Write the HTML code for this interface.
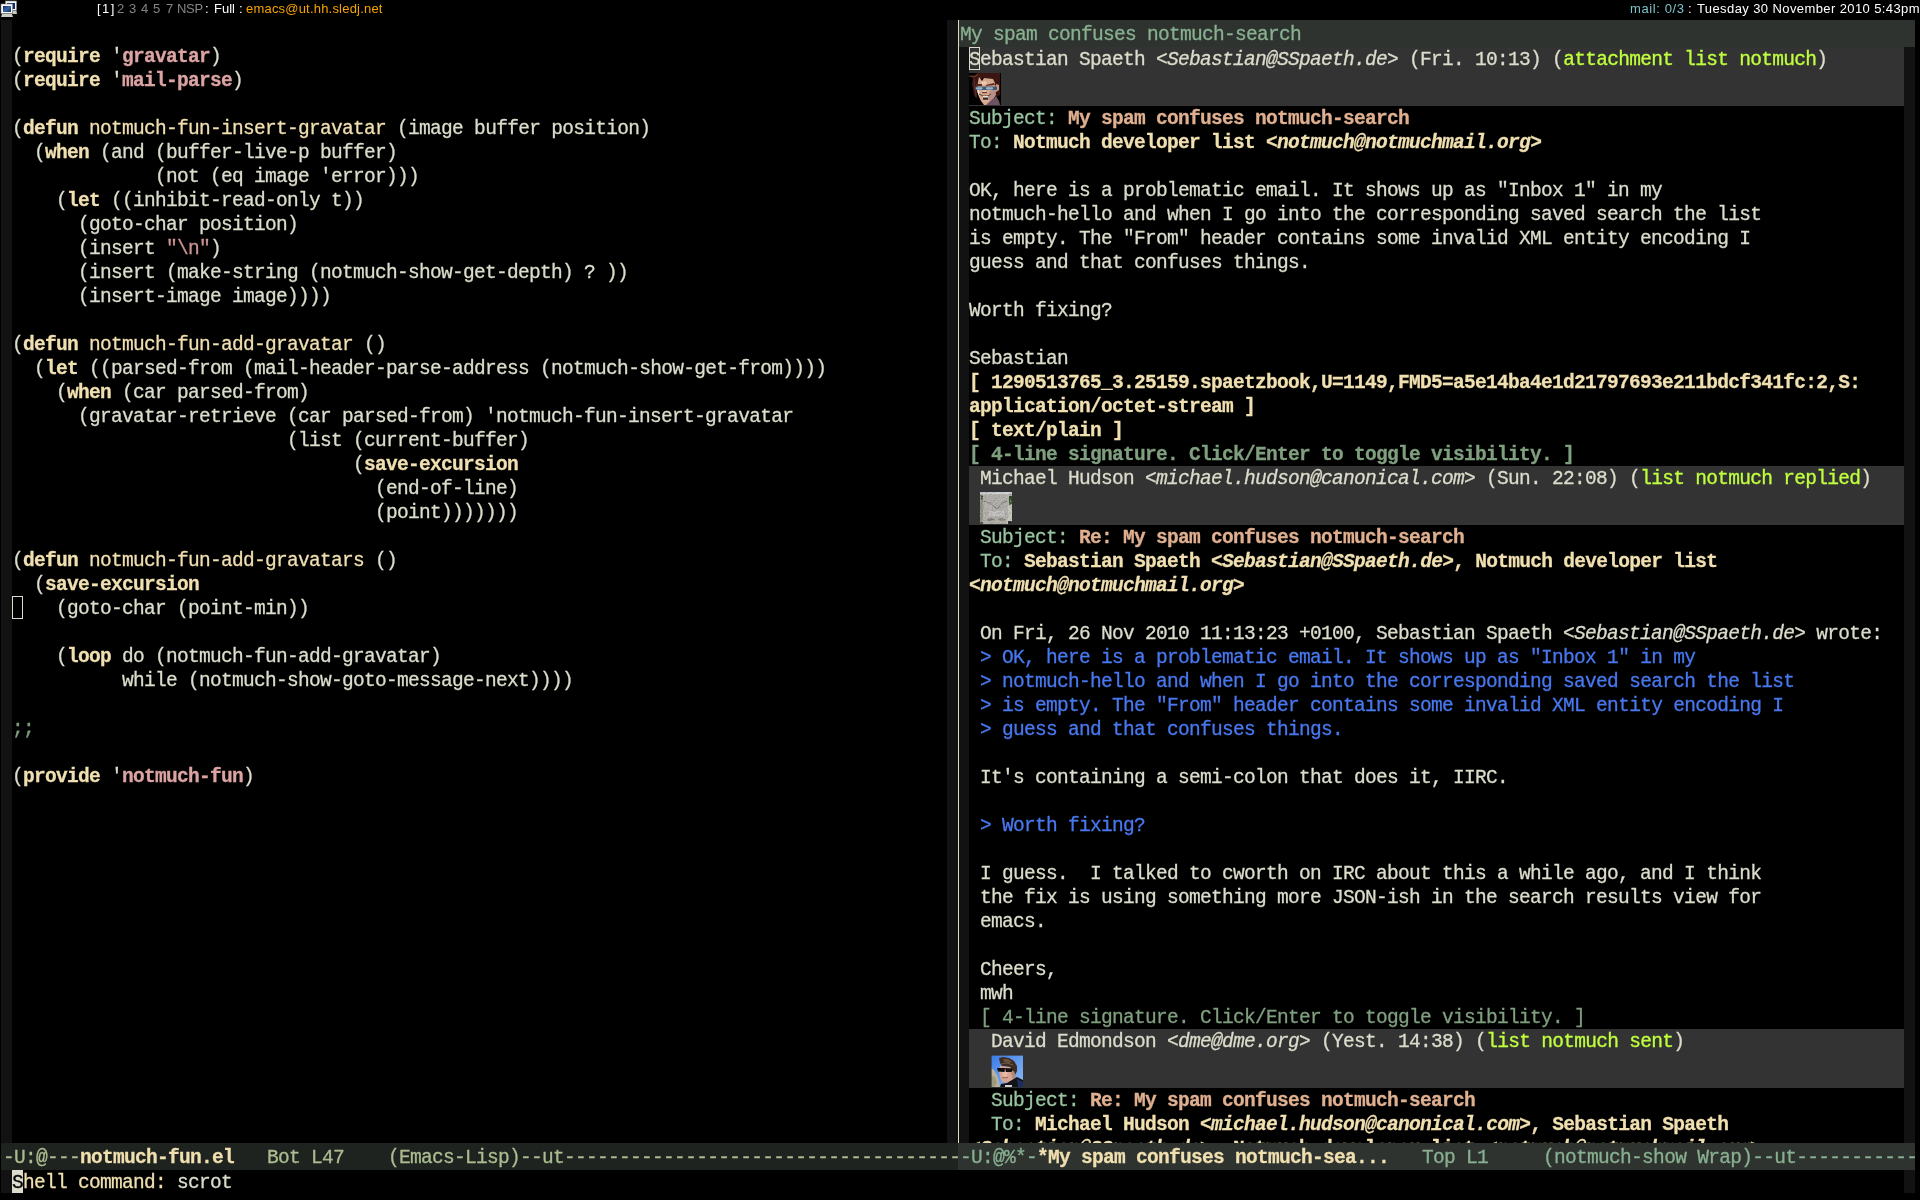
<!DOCTYPE html>
<html><head><meta charset="utf-8"><style>
html,body{margin:0;padding:0;background:#000;width:1920px;height:1200px;overflow:hidden;position:relative}
.r,.wm{will-change:transform}
.r{-webkit-text-stroke:0.3px currentColor;position:absolute;font-family:"Liberation Mono",monospace;font-size:19.5px;letter-spacing:-0.700px;line-height:24px;white-space:pre;color:#dcdccc;height:24px}
.k{color:#f0dfaf;font-weight:bold}
.f{color:#f0dfaf}
.c{color:#dca3a3;font-weight:bold}
.s{color:#cc9393}
.cm{color:#7f9f7f}
.hn{color:#98c4a0}
.sub{color:#dfaf8f;font-weight:bold}
.to{color:#f0dfaf;font-weight:bold}
.toi{color:#f0dfaf;font-weight:bold;font-style:italic}
.i{font-style:italic}
.tag{color:#c0ff3e}
.q{color:#4878f0}
.att{color:#f0dfaf;font-weight:bold}
.sig{color:#7f9f7f}
.sigb{color:#7f9f7f;font-weight:bold}
.hl{color:#88b090}
.ml1{color:#acbc90}
.ml2{color:#88b090}
.mp{color:#f0dfaf}
.cur{color:#000}
.mb{color:#f0dfaf;font-weight:bold}
.sum{position:absolute;left:969px;width:935px;background:#333333}
.av{position:absolute;width:32px;height:32px;overflow:hidden}
.fr{position:absolute;background:#121212}
.clip{position:absolute;overflow:hidden}
.wm{position:absolute;top:0;font-family:"Liberation Sans",sans-serif;font-size:13px;line-height:17px;white-space:pre;color:#fff}
</style></head>
<body>
<!-- WM bar -->
<svg style="position:absolute;left:0;top:0" width="20" height="20" viewBox="0 0 20 20">
<defs><linearGradient id="scr" x1="0" y1="0" x2="1" y2="1"><stop offset="0" stop-color="#0c2a64"/><stop offset="0.5" stop-color="#3a64a0"/><stop offset="1" stop-color="#0c2a64"/></linearGradient></defs>
<rect x="5.5" y="1" width="11" height="9.5" fill="#f4f4f4" stroke="#8a8a8a" stroke-width="0.6"/>
<rect x="7" y="3" width="8" height="6" fill="#0e2c68"/>
<polygon points="13,11 16.5,11 17,14 12.5,14" fill="#c4c8c0"/>
<rect x="1" y="4" width="11.5" height="9.5" fill="#f8f8f8" stroke="#8a8a8a" stroke-width="0.6"/>
<rect x="3" y="6" width="8" height="6" fill="url(#scr)"/>
<polygon points="2,14 12,14 13,17 1,17" fill="#c8ccc4"/>
</svg><div class="wm" style="left:97px;color:#ffffff;letter-spacing:1.5px">[1]</div>
<div class="wm" style="left:117px;color:#858585;letter-spacing:0px">2</div>
<div class="wm" style="left:129px;color:#858585;letter-spacing:0px">3</div>
<div class="wm" style="left:141px;color:#858585;letter-spacing:0px">4</div>
<div class="wm" style="left:153px;color:#858585;letter-spacing:0px">5</div>
<div class="wm" style="left:166px;color:#858585;letter-spacing:0px">7</div>
<div class="wm" style="left:177px;color:#858585;letter-spacing:-0.3px">NSP</div>
<div class="wm" style="left:205px;color:#ffffff;letter-spacing:0px">:</div>
<div class="wm" style="left:214px;color:#ffffff;letter-spacing:0px">Full</div>
<div class="wm" style="left:239px;color:#ffffff;letter-spacing:0px">:</div>
<div class="wm" style="left:246px;color:#f5a300;letter-spacing:0.2px">emacs@ut.hh.sledj.net</div>
<div class="wm" style="left:1630px;color:#7cc4c8;letter-spacing:0.6px">mail: 0/3</div>
<div class="wm" style="left:1688px;color:#ffffff;letter-spacing:0px">:</div>
<div class="wm" style="left:1697px;color:#ffffff;letter-spacing:0.4px">Tuesday 30 November 2010 5:43pm</div>
<!-- fringes -->
<div class="fr" style="left:1px;top:20px;width:11px;height:1123px"></div>
<div class="fr" style="left:947px;top:20px;width:11px;height:1123px"></div>
<div style="position:absolute;left:958px;top:20px;width:1px;height:1123px;background:#dcdcc0"></div>
<div class="fr" style="left:959px;top:47px;width:10px;height:1096px"></div>
<div class="fr" style="left:1904px;top:47px;width:11px;height:1096px"></div>
<div class="fr" style="left:1px;top:1170px;width:11px;height:23px"></div>
<div class="fr" style="left:1904px;top:1170px;width:11px;height:23px"></div>
<!-- left text -->
<div class="clip" style="left:0;top:20px;width:947px;height:1123px">
<div style="position:absolute;left:0;top:-20px">
<div class="r" style="left:12px;top:45px">(<span class="k">require</span> &#x27;<span class="c">gravatar</span>)</div>
<div class="r" style="left:12px;top:69px">(<span class="k">require</span> &#x27;<span class="c">mail-parse</span>)</div>
<div class="r" style="left:12px;top:117px">(<span class="k">defun</span> <span class="f">notmuch-fun-insert-gravatar</span> (image buffer position)</div>
<div class="r" style="left:12px;top:141px">  (<span class="k">when</span> (and (buffer-live-p buffer)</div>
<div class="r" style="left:12px;top:165px">             (not (eq image &#x27;error)))</div>
<div class="r" style="left:12px;top:189px">    (<span class="k">let</span> ((inhibit-read-only t))</div>
<div class="r" style="left:12px;top:213px">      (goto-char position)</div>
<div class="r" style="left:12px;top:237px">      (insert <span class="s">&quot;\n&quot;</span>)</div>
<div class="r" style="left:12px;top:261px">      (insert (make-string (notmuch-show-get-depth) ? ))</div>
<div class="r" style="left:12px;top:285px">      (insert-image image))))</div>
<div class="r" style="left:12px;top:333px">(<span class="k">defun</span> <span class="f">notmuch-fun-add-gravatar</span> ()</div>
<div class="r" style="left:12px;top:357px">  (<span class="k">let</span> ((parsed-from (mail-header-parse-address (notmuch-show-get-from))))</div>
<div class="r" style="left:12px;top:381px">    (<span class="k">when</span> (car parsed-from)</div>
<div class="r" style="left:12px;top:405px">      (gravatar-retrieve (car parsed-from) &#x27;notmuch-fun-insert-gravatar</div>
<div class="r" style="left:12px;top:429px">                         (list (current-buffer)</div>
<div class="r" style="left:12px;top:453px">                               (<span class="k">save-excursion</span></div>
<div class="r" style="left:12px;top:477px">                                 (end-of-line)</div>
<div class="r" style="left:12px;top:501px">                                 (point)))))))</div>
<div class="r" style="left:12px;top:549px">(<span class="k">defun</span> <span class="f">notmuch-fun-add-gravatars</span> ()</div>
<div class="r" style="left:12px;top:573px">  (<span class="k">save-excursion</span></div>
<div class="r" style="left:12px;top:597px">    (goto-char (point-min))</div>
<div class="r" style="left:12px;top:645px">    (<span class="k">loop</span> do (notmuch-fun-add-gravatar)</div>
<div class="r" style="left:12px;top:669px">          while (notmuch-show-goto-message-next))))</div>
<div class="r" style="left:12px;top:717px"><span class="cm">;;</span></div>
<div class="r" style="left:12px;top:765px">(<span class="k">provide</span> &#x27;<span class="c">notmuch-fun</span>)</div>
</div></div>
<div class="clip" style="left:959px;top:47px;width:956px;height:1096px">
<div style="position:absolute;left:-959px;top:-47px">
<div class="sum" style="top:47px;height:59px"></div>
<div class="r" style="left:969px;top:48px">Sebastian Spaeth &lt;<span class="i">Sebastian@SSpaeth.de</span>&gt; (Fri. 10:13) (<span class="tag">attachment list notmuch</span>)</div>
<div class="av" style="left:969px;top:73px"><svg width="32" height="32" viewBox="0 0 32 32"><rect width="32" height="32" fill="#000"/>
<polygon points="0,3 5,2 9,0 31,0 31,22 27,24 26,10 22,6 14,5 10,8 8,14 8,26 5,22 3,12 4,5" fill="#3c1612"/>
<polyline points="0,3 6,4 9,1" fill="none" stroke="#6a4030" stroke-width="1"/>
<polyline points="5,6 6,16 7,24" fill="none" stroke="#5a3428" stroke-width="1"/>
<polygon points="9,9 10,4 13,8 15,5 24,6 26,10 27,17 26,23 23,28 20,32 15,32 12,28 10,24 8,18" fill="#d6a88e"/>
<polygon points="27,11 30,12 30,17 27,19" fill="#c89a84"/>
<polygon points="8,16 10,17 11,23 9,21" fill="#f0dcd0"/>
<polygon points="12,9 17,8 18,11 13,12" fill="#ecc8b4"/>
<polygon points="7,11 13,11 13,13 7,13" fill="#5a2a20"/>
<polygon points="17,12 25,10 26,12 17,13" fill="#5a2a20"/>
<polygon points="21,18 26,16 27,22 24,26 20,29 19,24" fill="#b89088"/>
<polygon points="19,30 25,25 27,23 30,28 31,32 17,32" fill="#6e5260"/>
<rect x="6" y="13.5" width="22" height="3.5" rx="1" fill="#405878"/>
<rect x="7" y="14.2" width="6.5" height="2.2" rx="0.8" fill="#98b8cc"/>
<rect x="17" y="14.2" width="7" height="2.2" rx="0.8" fill="#98b8cc"/>
<rect x="14" y="17" width="3" height="2" fill="#e8c4b0"/>
<rect x="13" y="19" width="5" height="1.2" fill="#6a4034"/>
<polyline points="10,21 14,23 19,23 22,21" fill="none" stroke="#5a3a34" stroke-width="1"/>
<rect x="14" y="23" width="5" height="1.6" fill="#e4e4dc"/>
<rect x="14" y="24.6" width="5" height="2.2" fill="#3a2830"/>
<rect x="14" y="27" width="6" height="2" fill="#e0b09a"/>
</svg></div>
<div class="r" style="left:969px;top:107px"><span class="hn">Subject:</span> <span class="sub">My spam confuses notmuch-search</span></div>
<div class="r" style="left:969px;top:131px"><span class="hn">To:</span> <span class="to">Notmuch developer list &lt;</span><span class="toi">notmuch@notmuchmail.org</span><span class="to">&gt;</span></div>
<div class="r" style="left:969px;top:179px">OK, here is a problematic email. It shows up as &quot;Inbox 1&quot; in my</div>
<div class="r" style="left:969px;top:203px">notmuch-hello and when I go into the corresponding saved search the list</div>
<div class="r" style="left:969px;top:227px">is empty. The &quot;From&quot; header contains some invalid XML entity encoding I</div>
<div class="r" style="left:969px;top:251px">guess and that confuses things.</div>
<div class="r" style="left:969px;top:299px">Worth fixing?</div>
<div class="r" style="left:969px;top:347px">Sebastian</div>
<div class="r" style="left:969px;top:371px"><span class="att">[ 1290513765_3.25159.spaetzbook,U=1149,FMD5=a5e14ba4e1d21797693e211bdcf341fc:2,S:</span></div>
<div class="r" style="left:969px;top:395px"><span class="att">application/octet-stream ]</span></div>
<div class="r" style="left:969px;top:419px"><span class="att">[ text/plain ]</span></div>
<div class="r" style="left:969px;top:443px"><span class="sigb">[ 4-line signature. Click/Enter to toggle visibility. ]</span></div>
<div class="sum" style="top:466px;height:59px"></div>
<div class="r" style="left:980px;top:467px">Michael Hudson &lt;<span class="i">michael.hudson@canonical.com</span>&gt; (Sun. 22:08) (<span class="tag">list notmuch replied</span>)</div>
<div class="av" style="left:980px;top:492px"><svg width="32" height="32" viewBox="0 0 32 32">
<rect width="32" height="32" fill="#b0aca6"/>
<rect x="0" y="0" width="32" height="2" fill="#cfd2d4"/>
<polygon points="0,2 2,3 3,10 3,24 2,30 0,30" fill="#8a8c7c"/>
<polygon points="1,3 3,4 3,8 1,7" fill="#2c3a22"/>
<rect x="29" y="4" width="3" height="11" fill="#2e4a24"/>
<polygon points="28,14 32,12 32,32 27,32 28,24" fill="#c4c8b8"/>
<polyline points="4,9 10,11 17,17 22,11 27,9" fill="none" stroke="#6a6a70" stroke-width="0.9"/>
<polygon points="9,19 24,19 25,24 8,24" fill="#c2c0be"/>
<polygon points="7,27 12,26 15,28 8,29" fill="#7c786e"/>
<polygon points="17,28 21,26 26,27 24,29" fill="#7c786e"/>
<rect x="8" y="30" width="16" height="2" fill="#aaa69a"/>
<rect x="0" y="30" width="3" height="2" fill="#504c40"/>
<rect x="28" y="29" width="4" height="3" fill="#2a2e26"/>
<rect x="0" y="0" width="1" height="1" fill="#8c8c8c" opacity="0.35"/><rect x="1" y="0" width="1" height="1" fill="#787878" opacity="0.35"/><rect x="2" y="0" width="1" height="1" fill="#a0a0a0" opacity="0.35"/><rect x="3" y="0" width="1" height="1" fill="#a0a0a0" opacity="0.35"/><rect x="4" y="0" width="1" height="1" fill="#a0a0a0" opacity="0.35"/><rect x="5" y="0" width="1" height="1" fill="#787878" opacity="0.35"/><rect x="6" y="0" width="1" height="1" fill="#787878" opacity="0.35"/><rect x="7" y="0" width="1" height="1" fill="#a0a0a0" opacity="0.35"/><rect x="8" y="0" width="1" height="1" fill="#a0a0a0" opacity="0.35"/><rect x="9" y="0" width="1" height="1" fill="#8c8c8c" opacity="0.35"/><rect x="12" y="0" width="1" height="1" fill="#a0a0a0" opacity="0.35"/><rect x="13" y="0" width="1" height="1" fill="#8c8c8c" opacity="0.35"/><rect x="14" y="0" width="1" height="1" fill="#8c8c8c" opacity="0.35"/><rect x="15" y="0" width="1" height="1" fill="#8c8c8c" opacity="0.35"/><rect x="20" y="0" width="1" height="1" fill="#a0a0a0" opacity="0.35"/><rect x="22" y="0" width="1" height="1" fill="#a0a0a0" opacity="0.35"/><rect x="31" y="0" width="1" height="1" fill="#8c8c8c" opacity="0.35"/><rect x="2" y="1" width="1" height="1" fill="#a0a0a0" opacity="0.35"/><rect x="3" y="1" width="1" height="1" fill="#d7d7d7" opacity="0.35"/><rect x="6" y="1" width="1" height="1" fill="#787878" opacity="0.35"/><rect x="7" y="1" width="1" height="1" fill="#d7d7d7" opacity="0.35"/><rect x="8" y="1" width="1" height="1" fill="#c8c8c8" opacity="0.35"/><rect x="9" y="1" width="1" height="1" fill="#d7d7d7" opacity="0.35"/><rect x="10" y="1" width="1" height="1" fill="#bebebe" opacity="0.35"/><rect x="11" y="1" width="1" height="1" fill="#a0a0a0" opacity="0.35"/><rect x="14" y="1" width="1" height="1" fill="#bebebe" opacity="0.35"/><rect x="15" y="1" width="1" height="1" fill="#d7d7d7" opacity="0.35"/><rect x="22" y="1" width="1" height="1" fill="#bebebe" opacity="0.35"/><rect x="23" y="1" width="1" height="1" fill="#a0a0a0" opacity="0.35"/><rect x="26" y="1" width="1" height="1" fill="#d7d7d7" opacity="0.35"/><rect x="28" y="1" width="1" height="1" fill="#d7d7d7" opacity="0.35"/><rect x="29" y="1" width="1" height="1" fill="#a0a0a0" opacity="0.35"/><rect x="30" y="1" width="1" height="1" fill="#787878" opacity="0.35"/><rect x="31" y="1" width="1" height="1" fill="#c8c8c8" opacity="0.35"/><rect x="0" y="2" width="1" height="1" fill="#8c8c8c" opacity="0.35"/><rect x="1" y="2" width="1" height="1" fill="#d7d7d7" opacity="0.35"/><rect x="2" y="2" width="1" height="1" fill="#d7d7d7" opacity="0.35"/><rect x="3" y="2" width="1" height="1" fill="#c8c8c8" opacity="0.35"/><rect x="7" y="2" width="1" height="1" fill="#d7d7d7" opacity="0.35"/><rect x="10" y="2" width="1" height="1" fill="#8c8c8c" opacity="0.35"/><rect x="11" y="2" width="1" height="1" fill="#8c8c8c" opacity="0.35"/><rect x="12" y="2" width="1" height="1" fill="#bebebe" opacity="0.35"/><rect x="13" y="2" width="1" height="1" fill="#d7d7d7" opacity="0.35"/><rect x="15" y="2" width="1" height="1" fill="#c8c8c8" opacity="0.35"/><rect x="16" y="2" width="1" height="1" fill="#d7d7d7" opacity="0.35"/><rect x="19" y="2" width="1" height="1" fill="#8c8c8c" opacity="0.35"/><rect x="24" y="2" width="1" height="1" fill="#bebebe" opacity="0.35"/><rect x="26" y="2" width="1" height="1" fill="#d7d7d7" opacity="0.35"/><rect x="27" y="2" width="1" height="1" fill="#d7d7d7" opacity="0.35"/><rect x="29" y="2" width="1" height="1" fill="#787878" opacity="0.35"/><rect x="31" y="2" width="1" height="1" fill="#787878" opacity="0.35"/><rect x="0" y="3" width="1" height="1" fill="#787878" opacity="0.35"/><rect x="1" y="3" width="1" height="1" fill="#a0a0a0" opacity="0.35"/><rect x="2" y="3" width="1" height="1" fill="#787878" opacity="0.35"/><rect x="5" y="3" width="1" height="1" fill="#8c8c8c" opacity="0.35"/><rect x="7" y="3" width="1" height="1" fill="#c8c8c8" opacity="0.35"/><rect x="11" y="3" width="1" height="1" fill="#d7d7d7" opacity="0.35"/><rect x="15" y="3" width="1" height="1" fill="#787878" opacity="0.35"/><rect x="21" y="3" width="1" height="1" fill="#a0a0a0" opacity="0.35"/><rect x="22" y="3" width="1" height="1" fill="#bebebe" opacity="0.35"/><rect x="24" y="3" width="1" height="1" fill="#a0a0a0" opacity="0.35"/><rect x="25" y="3" width="1" height="1" fill="#bebebe" opacity="0.35"/><rect x="28" y="3" width="1" height="1" fill="#c8c8c8" opacity="0.35"/><rect x="30" y="3" width="1" height="1" fill="#8c8c8c" opacity="0.35"/><rect x="1" y="4" width="1" height="1" fill="#8c8c8c" opacity="0.35"/><rect x="5" y="4" width="1" height="1" fill="#8c8c8c" opacity="0.35"/><rect x="8" y="4" width="1" height="1" fill="#a0a0a0" opacity="0.35"/><rect x="14" y="4" width="1" height="1" fill="#a0a0a0" opacity="0.35"/><rect x="16" y="4" width="1" height="1" fill="#bebebe" opacity="0.35"/><rect x="19" y="4" width="1" height="1" fill="#8c8c8c" opacity="0.35"/><rect x="20" y="4" width="1" height="1" fill="#d7d7d7" opacity="0.35"/><rect x="21" y="4" width="1" height="1" fill="#8c8c8c" opacity="0.35"/><rect x="25" y="4" width="1" height="1" fill="#bebebe" opacity="0.35"/><rect x="26" y="4" width="1" height="1" fill="#bebebe" opacity="0.35"/><rect x="27" y="4" width="1" height="1" fill="#bebebe" opacity="0.35"/><rect x="28" y="4" width="1" height="1" fill="#d7d7d7" opacity="0.35"/><rect x="0" y="5" width="1" height="1" fill="#bebebe" opacity="0.35"/><rect x="1" y="5" width="1" height="1" fill="#bebebe" opacity="0.35"/><rect x="2" y="5" width="1" height="1" fill="#d7d7d7" opacity="0.35"/><rect x="4" y="5" width="1" height="1" fill="#8c8c8c" opacity="0.35"/><rect x="5" y="5" width="1" height="1" fill="#8c8c8c" opacity="0.35"/><rect x="6" y="5" width="1" height="1" fill="#a0a0a0" opacity="0.35"/><rect x="9" y="5" width="1" height="1" fill="#a0a0a0" opacity="0.35"/><rect x="12" y="5" width="1" height="1" fill="#a0a0a0" opacity="0.35"/><rect x="14" y="5" width="1" height="1" fill="#bebebe" opacity="0.35"/><rect x="18" y="5" width="1" height="1" fill="#8c8c8c" opacity="0.35"/><rect x="20" y="5" width="1" height="1" fill="#c8c8c8" opacity="0.35"/><rect x="21" y="5" width="1" height="1" fill="#a0a0a0" opacity="0.35"/><rect x="22" y="5" width="1" height="1" fill="#a0a0a0" opacity="0.35"/><rect x="23" y="5" width="1" height="1" fill="#a0a0a0" opacity="0.35"/><rect x="24" y="5" width="1" height="1" fill="#8c8c8c" opacity="0.35"/><rect x="25" y="5" width="1" height="1" fill="#bebebe" opacity="0.35"/><rect x="26" y="5" width="1" height="1" fill="#d7d7d7" opacity="0.35"/><rect x="0" y="6" width="1" height="1" fill="#8c8c8c" opacity="0.35"/><rect x="2" y="6" width="1" height="1" fill="#d7d7d7" opacity="0.35"/><rect x="6" y="6" width="1" height="1" fill="#8c8c8c" opacity="0.35"/><rect x="10" y="6" width="1" height="1" fill="#a0a0a0" opacity="0.35"/><rect x="15" y="6" width="1" height="1" fill="#8c8c8c" opacity="0.35"/><rect x="16" y="6" width="1" height="1" fill="#787878" opacity="0.35"/><rect x="21" y="6" width="1" height="1" fill="#a0a0a0" opacity="0.35"/><rect x="24" y="6" width="1" height="1" fill="#c8c8c8" opacity="0.35"/><rect x="0" y="7" width="1" height="1" fill="#a0a0a0" opacity="0.35"/><rect x="2" y="7" width="1" height="1" fill="#d7d7d7" opacity="0.35"/><rect x="3" y="7" width="1" height="1" fill="#787878" opacity="0.35"/><rect x="4" y="7" width="1" height="1" fill="#c8c8c8" opacity="0.35"/><rect x="5" y="7" width="1" height="1" fill="#8c8c8c" opacity="0.35"/><rect x="6" y="7" width="1" height="1" fill="#8c8c8c" opacity="0.35"/><rect x="10" y="7" width="1" height="1" fill="#bebebe" opacity="0.35"/><rect x="12" y="7" width="1" height="1" fill="#c8c8c8" opacity="0.35"/><rect x="15" y="7" width="1" height="1" fill="#787878" opacity="0.35"/><rect x="16" y="7" width="1" height="1" fill="#d7d7d7" opacity="0.35"/><rect x="17" y="7" width="1" height="1" fill="#bebebe" opacity="0.35"/><rect x="19" y="7" width="1" height="1" fill="#d7d7d7" opacity="0.35"/><rect x="21" y="7" width="1" height="1" fill="#d7d7d7" opacity="0.35"/><rect x="22" y="7" width="1" height="1" fill="#c8c8c8" opacity="0.35"/><rect x="23" y="7" width="1" height="1" fill="#c8c8c8" opacity="0.35"/><rect x="24" y="7" width="1" height="1" fill="#a0a0a0" opacity="0.35"/><rect x="27" y="7" width="1" height="1" fill="#a0a0a0" opacity="0.35"/><rect x="30" y="7" width="1" height="1" fill="#8c8c8c" opacity="0.35"/><rect x="0" y="8" width="1" height="1" fill="#c8c8c8" opacity="0.35"/><rect x="1" y="8" width="1" height="1" fill="#8c8c8c" opacity="0.35"/><rect x="2" y="8" width="1" height="1" fill="#8c8c8c" opacity="0.35"/><rect x="7" y="8" width="1" height="1" fill="#a0a0a0" opacity="0.35"/><rect x="11" y="8" width="1" height="1" fill="#787878" opacity="0.35"/><rect x="13" y="8" width="1" height="1" fill="#787878" opacity="0.35"/><rect x="14" y="8" width="1" height="1" fill="#787878" opacity="0.35"/><rect x="17" y="8" width="1" height="1" fill="#8c8c8c" opacity="0.35"/><rect x="18" y="8" width="1" height="1" fill="#787878" opacity="0.35"/><rect x="20" y="8" width="1" height="1" fill="#a0a0a0" opacity="0.35"/><rect x="21" y="8" width="1" height="1" fill="#c8c8c8" opacity="0.35"/><rect x="23" y="8" width="1" height="1" fill="#bebebe" opacity="0.35"/><rect x="24" y="8" width="1" height="1" fill="#787878" opacity="0.35"/><rect x="26" y="8" width="1" height="1" fill="#8c8c8c" opacity="0.35"/><rect x="27" y="8" width="1" height="1" fill="#c8c8c8" opacity="0.35"/><rect x="30" y="8" width="1" height="1" fill="#d7d7d7" opacity="0.35"/><rect x="0" y="9" width="1" height="1" fill="#c8c8c8" opacity="0.35"/><rect x="3" y="9" width="1" height="1" fill="#787878" opacity="0.35"/><rect x="6" y="9" width="1" height="1" fill="#d7d7d7" opacity="0.35"/><rect x="7" y="9" width="1" height="1" fill="#d7d7d7" opacity="0.35"/><rect x="8" y="9" width="1" height="1" fill="#bebebe" opacity="0.35"/><rect x="9" y="9" width="1" height="1" fill="#d7d7d7" opacity="0.35"/><rect x="13" y="9" width="1" height="1" fill="#8c8c8c" opacity="0.35"/><rect x="15" y="9" width="1" height="1" fill="#bebebe" opacity="0.35"/><rect x="17" y="9" width="1" height="1" fill="#c8c8c8" opacity="0.35"/><rect x="20" y="9" width="1" height="1" fill="#bebebe" opacity="0.35"/><rect x="22" y="9" width="1" height="1" fill="#8c8c8c" opacity="0.35"/><rect x="23" y="9" width="1" height="1" fill="#bebebe" opacity="0.35"/><rect x="27" y="9" width="1" height="1" fill="#8c8c8c" opacity="0.35"/><rect x="29" y="9" width="1" height="1" fill="#8c8c8c" opacity="0.35"/><rect x="30" y="9" width="1" height="1" fill="#d7d7d7" opacity="0.35"/><rect x="31" y="9" width="1" height="1" fill="#c8c8c8" opacity="0.35"/><rect x="3" y="10" width="1" height="1" fill="#c8c8c8" opacity="0.35"/><rect x="4" y="10" width="1" height="1" fill="#8c8c8c" opacity="0.35"/><rect x="5" y="10" width="1" height="1" fill="#d7d7d7" opacity="0.35"/><rect x="6" y="10" width="1" height="1" fill="#c8c8c8" opacity="0.35"/><rect x="8" y="10" width="1" height="1" fill="#a0a0a0" opacity="0.35"/><rect x="10" y="10" width="1" height="1" fill="#787878" opacity="0.35"/><rect x="11" y="10" width="1" height="1" fill="#a0a0a0" opacity="0.35"/><rect x="12" y="10" width="1" height="1" fill="#787878" opacity="0.35"/><rect x="13" y="10" width="1" height="1" fill="#bebebe" opacity="0.35"/><rect x="14" y="10" width="1" height="1" fill="#a0a0a0" opacity="0.35"/><rect x="17" y="10" width="1" height="1" fill="#bebebe" opacity="0.35"/><rect x="23" y="10" width="1" height="1" fill="#a0a0a0" opacity="0.35"/><rect x="25" y="10" width="1" height="1" fill="#bebebe" opacity="0.35"/><rect x="30" y="10" width="1" height="1" fill="#a0a0a0" opacity="0.35"/><rect x="2" y="11" width="1" height="1" fill="#bebebe" opacity="0.35"/><rect x="7" y="11" width="1" height="1" fill="#787878" opacity="0.35"/><rect x="8" y="11" width="1" height="1" fill="#bebebe" opacity="0.35"/><rect x="9" y="11" width="1" height="1" fill="#787878" opacity="0.35"/><rect x="10" y="11" width="1" height="1" fill="#d7d7d7" opacity="0.35"/><rect x="16" y="11" width="1" height="1" fill="#787878" opacity="0.35"/><rect x="21" y="11" width="1" height="1" fill="#bebebe" opacity="0.35"/><rect x="25" y="11" width="1" height="1" fill="#8c8c8c" opacity="0.35"/><rect x="26" y="11" width="1" height="1" fill="#bebebe" opacity="0.35"/><rect x="29" y="11" width="1" height="1" fill="#d7d7d7" opacity="0.35"/><rect x="31" y="11" width="1" height="1" fill="#787878" opacity="0.35"/><rect x="2" y="12" width="1" height="1" fill="#8c8c8c" opacity="0.35"/><rect x="3" y="12" width="1" height="1" fill="#bebebe" opacity="0.35"/><rect x="5" y="12" width="1" height="1" fill="#a0a0a0" opacity="0.35"/><rect x="6" y="12" width="1" height="1" fill="#d7d7d7" opacity="0.35"/><rect x="7" y="12" width="1" height="1" fill="#c8c8c8" opacity="0.35"/><rect x="9" y="12" width="1" height="1" fill="#8c8c8c" opacity="0.35"/><rect x="11" y="12" width="1" height="1" fill="#a0a0a0" opacity="0.35"/><rect x="12" y="12" width="1" height="1" fill="#d7d7d7" opacity="0.35"/><rect x="14" y="12" width="1" height="1" fill="#a0a0a0" opacity="0.35"/><rect x="15" y="12" width="1" height="1" fill="#787878" opacity="0.35"/><rect x="17" y="12" width="1" height="1" fill="#d7d7d7" opacity="0.35"/><rect x="18" y="12" width="1" height="1" fill="#a0a0a0" opacity="0.35"/><rect x="20" y="12" width="1" height="1" fill="#c8c8c8" opacity="0.35"/><rect x="21" y="12" width="1" height="1" fill="#8c8c8c" opacity="0.35"/><rect x="22" y="12" width="1" height="1" fill="#787878" opacity="0.35"/><rect x="23" y="12" width="1" height="1" fill="#a0a0a0" opacity="0.35"/><rect x="24" y="12" width="1" height="1" fill="#c8c8c8" opacity="0.35"/><rect x="25" y="12" width="1" height="1" fill="#bebebe" opacity="0.35"/><rect x="29" y="12" width="1" height="1" fill="#d7d7d7" opacity="0.35"/><rect x="30" y="12" width="1" height="1" fill="#8c8c8c" opacity="0.35"/><rect x="31" y="12" width="1" height="1" fill="#d7d7d7" opacity="0.35"/><rect x="1" y="13" width="1" height="1" fill="#bebebe" opacity="0.35"/><rect x="2" y="13" width="1" height="1" fill="#c8c8c8" opacity="0.35"/><rect x="3" y="13" width="1" height="1" fill="#787878" opacity="0.35"/><rect x="5" y="13" width="1" height="1" fill="#c8c8c8" opacity="0.35"/><rect x="7" y="13" width="1" height="1" fill="#8c8c8c" opacity="0.35"/><rect x="10" y="13" width="1" height="1" fill="#c8c8c8" opacity="0.35"/><rect x="11" y="13" width="1" height="1" fill="#d7d7d7" opacity="0.35"/><rect x="14" y="13" width="1" height="1" fill="#d7d7d7" opacity="0.35"/><rect x="17" y="13" width="1" height="1" fill="#787878" opacity="0.35"/><rect x="19" y="13" width="1" height="1" fill="#8c8c8c" opacity="0.35"/><rect x="20" y="13" width="1" height="1" fill="#c8c8c8" opacity="0.35"/><rect x="21" y="13" width="1" height="1" fill="#c8c8c8" opacity="0.35"/><rect x="22" y="13" width="1" height="1" fill="#c8c8c8" opacity="0.35"/><rect x="24" y="13" width="1" height="1" fill="#787878" opacity="0.35"/><rect x="31" y="13" width="1" height="1" fill="#bebebe" opacity="0.35"/><rect x="0" y="14" width="1" height="1" fill="#a0a0a0" opacity="0.35"/><rect x="3" y="14" width="1" height="1" fill="#787878" opacity="0.35"/><rect x="6" y="14" width="1" height="1" fill="#d7d7d7" opacity="0.35"/><rect x="7" y="14" width="1" height="1" fill="#c8c8c8" opacity="0.35"/><rect x="8" y="14" width="1" height="1" fill="#bebebe" opacity="0.35"/><rect x="10" y="14" width="1" height="1" fill="#bebebe" opacity="0.35"/><rect x="11" y="14" width="1" height="1" fill="#d7d7d7" opacity="0.35"/><rect x="13" y="14" width="1" height="1" fill="#8c8c8c" opacity="0.35"/><rect x="15" y="14" width="1" height="1" fill="#a0a0a0" opacity="0.35"/><rect x="18" y="14" width="1" height="1" fill="#c8c8c8" opacity="0.35"/><rect x="20" y="14" width="1" height="1" fill="#8c8c8c" opacity="0.35"/><rect x="22" y="14" width="1" height="1" fill="#8c8c8c" opacity="0.35"/><rect x="23" y="14" width="1" height="1" fill="#787878" opacity="0.35"/><rect x="24" y="14" width="1" height="1" fill="#c8c8c8" opacity="0.35"/><rect x="25" y="14" width="1" height="1" fill="#a0a0a0" opacity="0.35"/><rect x="26" y="14" width="1" height="1" fill="#787878" opacity="0.35"/><rect x="28" y="14" width="1" height="1" fill="#d7d7d7" opacity="0.35"/><rect x="30" y="14" width="1" height="1" fill="#c8c8c8" opacity="0.35"/><rect x="31" y="14" width="1" height="1" fill="#787878" opacity="0.35"/><rect x="2" y="15" width="1" height="1" fill="#bebebe" opacity="0.35"/><rect x="6" y="15" width="1" height="1" fill="#c8c8c8" opacity="0.35"/><rect x="8" y="15" width="1" height="1" fill="#bebebe" opacity="0.35"/><rect x="9" y="15" width="1" height="1" fill="#c8c8c8" opacity="0.35"/><rect x="12" y="15" width="1" height="1" fill="#787878" opacity="0.35"/><rect x="13" y="15" width="1" height="1" fill="#d7d7d7" opacity="0.35"/><rect x="16" y="15" width="1" height="1" fill="#a0a0a0" opacity="0.35"/><rect x="19" y="15" width="1" height="1" fill="#787878" opacity="0.35"/><rect x="20" y="15" width="1" height="1" fill="#8c8c8c" opacity="0.35"/><rect x="29" y="15" width="1" height="1" fill="#8c8c8c" opacity="0.35"/><rect x="30" y="15" width="1" height="1" fill="#787878" opacity="0.35"/><rect x="0" y="16" width="1" height="1" fill="#8c8c8c" opacity="0.35"/><rect x="3" y="16" width="1" height="1" fill="#787878" opacity="0.35"/><rect x="4" y="16" width="1" height="1" fill="#c8c8c8" opacity="0.35"/><rect x="7" y="16" width="1" height="1" fill="#8c8c8c" opacity="0.35"/><rect x="9" y="16" width="1" height="1" fill="#a0a0a0" opacity="0.35"/><rect x="10" y="16" width="1" height="1" fill="#d7d7d7" opacity="0.35"/><rect x="11" y="16" width="1" height="1" fill="#c8c8c8" opacity="0.35"/><rect x="15" y="16" width="1" height="1" fill="#8c8c8c" opacity="0.35"/><rect x="16" y="16" width="1" height="1" fill="#d7d7d7" opacity="0.35"/><rect x="18" y="16" width="1" height="1" fill="#787878" opacity="0.35"/><rect x="19" y="16" width="1" height="1" fill="#bebebe" opacity="0.35"/><rect x="21" y="16" width="1" height="1" fill="#8c8c8c" opacity="0.35"/><rect x="24" y="16" width="1" height="1" fill="#787878" opacity="0.35"/><rect x="27" y="16" width="1" height="1" fill="#d7d7d7" opacity="0.35"/><rect x="28" y="16" width="1" height="1" fill="#c8c8c8" opacity="0.35"/><rect x="31" y="16" width="1" height="1" fill="#8c8c8c" opacity="0.35"/><rect x="0" y="17" width="1" height="1" fill="#8c8c8c" opacity="0.35"/><rect x="1" y="17" width="1" height="1" fill="#8c8c8c" opacity="0.35"/><rect x="2" y="17" width="1" height="1" fill="#c8c8c8" opacity="0.35"/><rect x="3" y="17" width="1" height="1" fill="#a0a0a0" opacity="0.35"/><rect x="5" y="17" width="1" height="1" fill="#8c8c8c" opacity="0.35"/><rect x="8" y="17" width="1" height="1" fill="#a0a0a0" opacity="0.35"/><rect x="9" y="17" width="1" height="1" fill="#d7d7d7" opacity="0.35"/><rect x="10" y="17" width="1" height="1" fill="#787878" opacity="0.35"/><rect x="12" y="17" width="1" height="1" fill="#787878" opacity="0.35"/><rect x="14" y="17" width="1" height="1" fill="#d7d7d7" opacity="0.35"/><rect x="20" y="17" width="1" height="1" fill="#8c8c8c" opacity="0.35"/><rect x="24" y="17" width="1" height="1" fill="#bebebe" opacity="0.35"/><rect x="25" y="17" width="1" height="1" fill="#c8c8c8" opacity="0.35"/><rect x="27" y="17" width="1" height="1" fill="#787878" opacity="0.35"/><rect x="28" y="17" width="1" height="1" fill="#c8c8c8" opacity="0.35"/><rect x="29" y="17" width="1" height="1" fill="#d7d7d7" opacity="0.35"/><rect x="31" y="17" width="1" height="1" fill="#8c8c8c" opacity="0.35"/><rect x="0" y="18" width="1" height="1" fill="#c8c8c8" opacity="0.35"/><rect x="2" y="18" width="1" height="1" fill="#787878" opacity="0.35"/><rect x="4" y="18" width="1" height="1" fill="#a0a0a0" opacity="0.35"/><rect x="6" y="18" width="1" height="1" fill="#c8c8c8" opacity="0.35"/><rect x="10" y="18" width="1" height="1" fill="#bebebe" opacity="0.35"/><rect x="12" y="18" width="1" height="1" fill="#787878" opacity="0.35"/><rect x="15" y="18" width="1" height="1" fill="#8c8c8c" opacity="0.35"/><rect x="18" y="18" width="1" height="1" fill="#c8c8c8" opacity="0.35"/><rect x="19" y="18" width="1" height="1" fill="#a0a0a0" opacity="0.35"/><rect x="20" y="18" width="1" height="1" fill="#bebebe" opacity="0.35"/><rect x="22" y="18" width="1" height="1" fill="#c8c8c8" opacity="0.35"/><rect x="23" y="18" width="1" height="1" fill="#bebebe" opacity="0.35"/><rect x="28" y="18" width="1" height="1" fill="#8c8c8c" opacity="0.35"/><rect x="29" y="18" width="1" height="1" fill="#bebebe" opacity="0.35"/><rect x="0" y="19" width="1" height="1" fill="#c8c8c8" opacity="0.35"/><rect x="3" y="19" width="1" height="1" fill="#d7d7d7" opacity="0.35"/><rect x="4" y="19" width="1" height="1" fill="#bebebe" opacity="0.35"/><rect x="5" y="19" width="1" height="1" fill="#bebebe" opacity="0.35"/><rect x="8" y="19" width="1" height="1" fill="#c8c8c8" opacity="0.35"/><rect x="13" y="19" width="1" height="1" fill="#8c8c8c" opacity="0.35"/><rect x="14" y="19" width="1" height="1" fill="#787878" opacity="0.35"/><rect x="18" y="19" width="1" height="1" fill="#d7d7d7" opacity="0.35"/><rect x="21" y="19" width="1" height="1" fill="#787878" opacity="0.35"/><rect x="22" y="19" width="1" height="1" fill="#d7d7d7" opacity="0.35"/><rect x="25" y="19" width="1" height="1" fill="#8c8c8c" opacity="0.35"/><rect x="26" y="19" width="1" height="1" fill="#d7d7d7" opacity="0.35"/><rect x="0" y="20" width="1" height="1" fill="#c8c8c8" opacity="0.35"/><rect x="1" y="20" width="1" height="1" fill="#a0a0a0" opacity="0.35"/><rect x="2" y="20" width="1" height="1" fill="#c8c8c8" opacity="0.35"/><rect x="4" y="20" width="1" height="1" fill="#8c8c8c" opacity="0.35"/><rect x="5" y="20" width="1" height="1" fill="#8c8c8c" opacity="0.35"/><rect x="6" y="20" width="1" height="1" fill="#a0a0a0" opacity="0.35"/><rect x="7" y="20" width="1" height="1" fill="#787878" opacity="0.35"/><rect x="8" y="20" width="1" height="1" fill="#8c8c8c" opacity="0.35"/><rect x="10" y="20" width="1" height="1" fill="#787878" opacity="0.35"/><rect x="13" y="20" width="1" height="1" fill="#d7d7d7" opacity="0.35"/><rect x="15" y="20" width="1" height="1" fill="#d7d7d7" opacity="0.35"/><rect x="17" y="20" width="1" height="1" fill="#c8c8c8" opacity="0.35"/><rect x="18" y="20" width="1" height="1" fill="#787878" opacity="0.35"/><rect x="19" y="20" width="1" height="1" fill="#a0a0a0" opacity="0.35"/><rect x="20" y="20" width="1" height="1" fill="#787878" opacity="0.35"/><rect x="21" y="20" width="1" height="1" fill="#8c8c8c" opacity="0.35"/><rect x="22" y="20" width="1" height="1" fill="#c8c8c8" opacity="0.35"/><rect x="25" y="20" width="1" height="1" fill="#bebebe" opacity="0.35"/><rect x="28" y="20" width="1" height="1" fill="#c8c8c8" opacity="0.35"/><rect x="29" y="20" width="1" height="1" fill="#787878" opacity="0.35"/><rect x="30" y="20" width="1" height="1" fill="#c8c8c8" opacity="0.35"/><rect x="31" y="20" width="1" height="1" fill="#bebebe" opacity="0.35"/><rect x="1" y="21" width="1" height="1" fill="#787878" opacity="0.35"/><rect x="3" y="21" width="1" height="1" fill="#c8c8c8" opacity="0.35"/><rect x="4" y="21" width="1" height="1" fill="#c8c8c8" opacity="0.35"/><rect x="5" y="21" width="1" height="1" fill="#787878" opacity="0.35"/><rect x="8" y="21" width="1" height="1" fill="#787878" opacity="0.35"/><rect x="11" y="21" width="1" height="1" fill="#a0a0a0" opacity="0.35"/><rect x="12" y="21" width="1" height="1" fill="#8c8c8c" opacity="0.35"/><rect x="13" y="21" width="1" height="1" fill="#c8c8c8" opacity="0.35"/><rect x="14" y="21" width="1" height="1" fill="#c8c8c8" opacity="0.35"/><rect x="16" y="21" width="1" height="1" fill="#787878" opacity="0.35"/><rect x="17" y="21" width="1" height="1" fill="#a0a0a0" opacity="0.35"/><rect x="19" y="21" width="1" height="1" fill="#787878" opacity="0.35"/><rect x="22" y="21" width="1" height="1" fill="#8c8c8c" opacity="0.35"/><rect x="23" y="21" width="1" height="1" fill="#d7d7d7" opacity="0.35"/><rect x="24" y="21" width="1" height="1" fill="#787878" opacity="0.35"/><rect x="25" y="21" width="1" height="1" fill="#8c8c8c" opacity="0.35"/><rect x="26" y="21" width="1" height="1" fill="#787878" opacity="0.35"/><rect x="27" y="21" width="1" height="1" fill="#c8c8c8" opacity="0.35"/><rect x="29" y="21" width="1" height="1" fill="#787878" opacity="0.35"/><rect x="30" y="21" width="1" height="1" fill="#8c8c8c" opacity="0.35"/><rect x="1" y="22" width="1" height="1" fill="#a0a0a0" opacity="0.35"/><rect x="4" y="22" width="1" height="1" fill="#c8c8c8" opacity="0.35"/><rect x="5" y="22" width="1" height="1" fill="#a0a0a0" opacity="0.35"/><rect x="6" y="22" width="1" height="1" fill="#787878" opacity="0.35"/><rect x="7" y="22" width="1" height="1" fill="#d7d7d7" opacity="0.35"/><rect x="11" y="22" width="1" height="1" fill="#787878" opacity="0.35"/><rect x="14" y="22" width="1" height="1" fill="#bebebe" opacity="0.35"/><rect x="15" y="22" width="1" height="1" fill="#bebebe" opacity="0.35"/><rect x="18" y="22" width="1" height="1" fill="#8c8c8c" opacity="0.35"/><rect x="21" y="22" width="1" height="1" fill="#d7d7d7" opacity="0.35"/><rect x="22" y="22" width="1" height="1" fill="#8c8c8c" opacity="0.35"/><rect x="23" y="22" width="1" height="1" fill="#a0a0a0" opacity="0.35"/><rect x="24" y="22" width="1" height="1" fill="#c8c8c8" opacity="0.35"/><rect x="25" y="22" width="1" height="1" fill="#8c8c8c" opacity="0.35"/><rect x="28" y="22" width="1" height="1" fill="#a0a0a0" opacity="0.35"/><rect x="0" y="23" width="1" height="1" fill="#d7d7d7" opacity="0.35"/><rect x="4" y="23" width="1" height="1" fill="#d7d7d7" opacity="0.35"/><rect x="5" y="23" width="1" height="1" fill="#8c8c8c" opacity="0.35"/><rect x="6" y="23" width="1" height="1" fill="#bebebe" opacity="0.35"/><rect x="7" y="23" width="1" height="1" fill="#a0a0a0" opacity="0.35"/><rect x="8" y="23" width="1" height="1" fill="#787878" opacity="0.35"/><rect x="9" y="23" width="1" height="1" fill="#d7d7d7" opacity="0.35"/><rect x="11" y="23" width="1" height="1" fill="#a0a0a0" opacity="0.35"/><rect x="14" y="23" width="1" height="1" fill="#d7d7d7" opacity="0.35"/><rect x="15" y="23" width="1" height="1" fill="#787878" opacity="0.35"/><rect x="16" y="23" width="1" height="1" fill="#d7d7d7" opacity="0.35"/><rect x="17" y="23" width="1" height="1" fill="#d7d7d7" opacity="0.35"/><rect x="20" y="23" width="1" height="1" fill="#8c8c8c" opacity="0.35"/><rect x="21" y="23" width="1" height="1" fill="#bebebe" opacity="0.35"/><rect x="22" y="23" width="1" height="1" fill="#bebebe" opacity="0.35"/><rect x="24" y="23" width="1" height="1" fill="#a0a0a0" opacity="0.35"/><rect x="28" y="23" width="1" height="1" fill="#787878" opacity="0.35"/><rect x="0" y="24" width="1" height="1" fill="#d7d7d7" opacity="0.35"/><rect x="1" y="24" width="1" height="1" fill="#8c8c8c" opacity="0.35"/><rect x="4" y="24" width="1" height="1" fill="#c8c8c8" opacity="0.35"/><rect x="6" y="24" width="1" height="1" fill="#c8c8c8" opacity="0.35"/><rect x="8" y="24" width="1" height="1" fill="#d7d7d7" opacity="0.35"/><rect x="9" y="24" width="1" height="1" fill="#a0a0a0" opacity="0.35"/><rect x="14" y="24" width="1" height="1" fill="#c8c8c8" opacity="0.35"/><rect x="15" y="24" width="1" height="1" fill="#8c8c8c" opacity="0.35"/><rect x="16" y="24" width="1" height="1" fill="#bebebe" opacity="0.35"/><rect x="20" y="24" width="1" height="1" fill="#c8c8c8" opacity="0.35"/><rect x="21" y="24" width="1" height="1" fill="#a0a0a0" opacity="0.35"/><rect x="22" y="24" width="1" height="1" fill="#c8c8c8" opacity="0.35"/><rect x="28" y="24" width="1" height="1" fill="#a0a0a0" opacity="0.35"/><rect x="30" y="24" width="1" height="1" fill="#c8c8c8" opacity="0.35"/><rect x="31" y="24" width="1" height="1" fill="#c8c8c8" opacity="0.35"/><rect x="1" y="25" width="1" height="1" fill="#787878" opacity="0.35"/><rect x="2" y="25" width="1" height="1" fill="#8c8c8c" opacity="0.35"/><rect x="5" y="25" width="1" height="1" fill="#a0a0a0" opacity="0.35"/><rect x="6" y="25" width="1" height="1" fill="#bebebe" opacity="0.35"/><rect x="13" y="25" width="1" height="1" fill="#c8c8c8" opacity="0.35"/><rect x="15" y="25" width="1" height="1" fill="#a0a0a0" opacity="0.35"/><rect x="16" y="25" width="1" height="1" fill="#787878" opacity="0.35"/><rect x="17" y="25" width="1" height="1" fill="#8c8c8c" opacity="0.35"/><rect x="19" y="25" width="1" height="1" fill="#787878" opacity="0.35"/><rect x="20" y="25" width="1" height="1" fill="#c8c8c8" opacity="0.35"/><rect x="21" y="25" width="1" height="1" fill="#a0a0a0" opacity="0.35"/><rect x="22" y="25" width="1" height="1" fill="#8c8c8c" opacity="0.35"/><rect x="23" y="25" width="1" height="1" fill="#c8c8c8" opacity="0.35"/><rect x="25" y="25" width="1" height="1" fill="#a0a0a0" opacity="0.35"/><rect x="27" y="25" width="1" height="1" fill="#787878" opacity="0.35"/><rect x="29" y="25" width="1" height="1" fill="#8c8c8c" opacity="0.35"/><rect x="31" y="25" width="1" height="1" fill="#8c8c8c" opacity="0.35"/><rect x="2" y="26" width="1" height="1" fill="#c8c8c8" opacity="0.35"/><rect x="4" y="26" width="1" height="1" fill="#a0a0a0" opacity="0.35"/><rect x="11" y="26" width="1" height="1" fill="#787878" opacity="0.35"/><rect x="12" y="26" width="1" height="1" fill="#a0a0a0" opacity="0.35"/><rect x="13" y="26" width="1" height="1" fill="#8c8c8c" opacity="0.35"/><rect x="14" y="26" width="1" height="1" fill="#787878" opacity="0.35"/><rect x="16" y="26" width="1" height="1" fill="#a0a0a0" opacity="0.35"/><rect x="19" y="26" width="1" height="1" fill="#8c8c8c" opacity="0.35"/><rect x="23" y="26" width="1" height="1" fill="#a0a0a0" opacity="0.35"/><rect x="24" y="26" width="1" height="1" fill="#c8c8c8" opacity="0.35"/><rect x="25" y="26" width="1" height="1" fill="#bebebe" opacity="0.35"/><rect x="26" y="26" width="1" height="1" fill="#bebebe" opacity="0.35"/><rect x="29" y="26" width="1" height="1" fill="#d7d7d7" opacity="0.35"/><rect x="2" y="27" width="1" height="1" fill="#787878" opacity="0.35"/><rect x="3" y="27" width="1" height="1" fill="#bebebe" opacity="0.35"/><rect x="4" y="27" width="1" height="1" fill="#c8c8c8" opacity="0.35"/><rect x="8" y="27" width="1" height="1" fill="#787878" opacity="0.35"/><rect x="9" y="27" width="1" height="1" fill="#a0a0a0" opacity="0.35"/><rect x="14" y="27" width="1" height="1" fill="#8c8c8c" opacity="0.35"/><rect x="15" y="27" width="1" height="1" fill="#a0a0a0" opacity="0.35"/><rect x="16" y="27" width="1" height="1" fill="#c8c8c8" opacity="0.35"/><rect x="19" y="27" width="1" height="1" fill="#8c8c8c" opacity="0.35"/><rect x="21" y="27" width="1" height="1" fill="#d7d7d7" opacity="0.35"/><rect x="22" y="27" width="1" height="1" fill="#8c8c8c" opacity="0.35"/><rect x="23" y="27" width="1" height="1" fill="#bebebe" opacity="0.35"/><rect x="30" y="27" width="1" height="1" fill="#787878" opacity="0.35"/><rect x="31" y="27" width="1" height="1" fill="#bebebe" opacity="0.35"/><rect x="0" y="28" width="1" height="1" fill="#c8c8c8" opacity="0.35"/><rect x="2" y="28" width="1" height="1" fill="#a0a0a0" opacity="0.35"/><rect x="3" y="28" width="1" height="1" fill="#8c8c8c" opacity="0.35"/><rect x="4" y="28" width="1" height="1" fill="#787878" opacity="0.35"/><rect x="5" y="28" width="1" height="1" fill="#a0a0a0" opacity="0.35"/><rect x="7" y="28" width="1" height="1" fill="#8c8c8c" opacity="0.35"/><rect x="9" y="28" width="1" height="1" fill="#8c8c8c" opacity="0.35"/><rect x="14" y="28" width="1" height="1" fill="#a0a0a0" opacity="0.35"/><rect x="16" y="28" width="1" height="1" fill="#a0a0a0" opacity="0.35"/><rect x="18" y="28" width="1" height="1" fill="#bebebe" opacity="0.35"/><rect x="20" y="28" width="1" height="1" fill="#8c8c8c" opacity="0.35"/><rect x="21" y="28" width="1" height="1" fill="#787878" opacity="0.35"/><rect x="22" y="28" width="1" height="1" fill="#bebebe" opacity="0.35"/><rect x="23" y="28" width="1" height="1" fill="#bebebe" opacity="0.35"/><rect x="26" y="28" width="1" height="1" fill="#bebebe" opacity="0.35"/><rect x="27" y="28" width="1" height="1" fill="#c8c8c8" opacity="0.35"/><rect x="28" y="28" width="1" height="1" fill="#c8c8c8" opacity="0.35"/><rect x="29" y="28" width="1" height="1" fill="#c8c8c8" opacity="0.35"/><rect x="31" y="28" width="1" height="1" fill="#c8c8c8" opacity="0.35"/><rect x="4" y="29" width="1" height="1" fill="#bebebe" opacity="0.35"/><rect x="5" y="29" width="1" height="1" fill="#d7d7d7" opacity="0.35"/><rect x="6" y="29" width="1" height="1" fill="#a0a0a0" opacity="0.35"/><rect x="8" y="29" width="1" height="1" fill="#bebebe" opacity="0.35"/><rect x="9" y="29" width="1" height="1" fill="#a0a0a0" opacity="0.35"/><rect x="10" y="29" width="1" height="1" fill="#787878" opacity="0.35"/><rect x="12" y="29" width="1" height="1" fill="#d7d7d7" opacity="0.35"/><rect x="13" y="29" width="1" height="1" fill="#8c8c8c" opacity="0.35"/><rect x="14" y="29" width="1" height="1" fill="#787878" opacity="0.35"/><rect x="15" y="29" width="1" height="1" fill="#d7d7d7" opacity="0.35"/><rect x="16" y="29" width="1" height="1" fill="#bebebe" opacity="0.35"/><rect x="18" y="29" width="1" height="1" fill="#d7d7d7" opacity="0.35"/><rect x="23" y="29" width="1" height="1" fill="#8c8c8c" opacity="0.35"/><rect x="25" y="29" width="1" height="1" fill="#8c8c8c" opacity="0.35"/><rect x="26" y="29" width="1" height="1" fill="#bebebe" opacity="0.35"/><rect x="31" y="29" width="1" height="1" fill="#c8c8c8" opacity="0.35"/><rect x="0" y="30" width="1" height="1" fill="#d7d7d7" opacity="0.35"/><rect x="4" y="30" width="1" height="1" fill="#bebebe" opacity="0.35"/><rect x="5" y="30" width="1" height="1" fill="#8c8c8c" opacity="0.35"/><rect x="6" y="30" width="1" height="1" fill="#d7d7d7" opacity="0.35"/><rect x="9" y="30" width="1" height="1" fill="#bebebe" opacity="0.35"/><rect x="10" y="30" width="1" height="1" fill="#d7d7d7" opacity="0.35"/><rect x="11" y="30" width="1" height="1" fill="#a0a0a0" opacity="0.35"/><rect x="15" y="30" width="1" height="1" fill="#c8c8c8" opacity="0.35"/><rect x="20" y="30" width="1" height="1" fill="#d7d7d7" opacity="0.35"/><rect x="21" y="30" width="1" height="1" fill="#c8c8c8" opacity="0.35"/><rect x="23" y="30" width="1" height="1" fill="#d7d7d7" opacity="0.35"/><rect x="27" y="30" width="1" height="1" fill="#bebebe" opacity="0.35"/><rect x="2" y="31" width="1" height="1" fill="#8c8c8c" opacity="0.35"/><rect x="3" y="31" width="1" height="1" fill="#8c8c8c" opacity="0.35"/><rect x="4" y="31" width="1" height="1" fill="#bebebe" opacity="0.35"/><rect x="6" y="31" width="1" height="1" fill="#bebebe" opacity="0.35"/><rect x="7" y="31" width="1" height="1" fill="#d7d7d7" opacity="0.35"/><rect x="8" y="31" width="1" height="1" fill="#8c8c8c" opacity="0.35"/><rect x="11" y="31" width="1" height="1" fill="#8c8c8c" opacity="0.35"/><rect x="12" y="31" width="1" height="1" fill="#787878" opacity="0.35"/><rect x="13" y="31" width="1" height="1" fill="#d7d7d7" opacity="0.35"/><rect x="15" y="31" width="1" height="1" fill="#d7d7d7" opacity="0.35"/><rect x="20" y="31" width="1" height="1" fill="#a0a0a0" opacity="0.35"/><rect x="22" y="31" width="1" height="1" fill="#8c8c8c" opacity="0.35"/><rect x="24" y="31" width="1" height="1" fill="#a0a0a0" opacity="0.35"/>
</svg></div>
<div class="r" style="left:969px;top:526px"> <span class="hn">Subject:</span> <span class="sub">Re: My spam confuses notmuch-search</span></div>
<div class="r" style="left:969px;top:550px"> <span class="hn">To:</span> <span class="to">Sebastian Spaeth &lt;</span><span class="toi">Sebastian@SSpaeth.de</span><span class="to">&gt;, Notmuch developer list</span></div>
<div class="r" style="left:969px;top:574px"><span class="to">&lt;</span><span class="toi">notmuch@notmuchmail.org</span><span class="to">&gt;</span></div>
<div class="r" style="left:969px;top:622px"> On Fri, 26 Nov 2010 11:13:23 +0100, Sebastian Spaeth &lt;<span class="i">Sebastian@SSpaeth.de</span>&gt; wrote:</div>
<div class="r" style="left:969px;top:646px"> <span class="q">&gt; OK, here is a problematic email. It shows up as &quot;Inbox 1&quot; in my</span></div>
<div class="r" style="left:969px;top:670px"> <span class="q">&gt; notmuch-hello and when I go into the corresponding saved search the list</span></div>
<div class="r" style="left:969px;top:694px"> <span class="q">&gt; is empty. The &quot;From&quot; header contains some invalid XML entity encoding I</span></div>
<div class="r" style="left:969px;top:718px"> <span class="q">&gt; guess and that confuses things.</span></div>
<div class="r" style="left:969px;top:766px"> It&#x27;s containing a semi-colon that does it, IIRC.</div>
<div class="r" style="left:969px;top:814px"> <span class="q">&gt; Worth fixing?</span></div>
<div class="r" style="left:969px;top:862px"> I guess.  I talked to cworth on IRC about this a while ago, and I think</div>
<div class="r" style="left:969px;top:886px"> the fix is using something more JSON-ish in the search results view for</div>
<div class="r" style="left:969px;top:910px"> emacs.</div>
<div class="r" style="left:969px;top:958px"> Cheers,</div>
<div class="r" style="left:969px;top:982px"> mwh</div>
<div class="r" style="left:969px;top:1006px"> <span class="sig">[ 4-line signature. Click/Enter to toggle visibility. ]</span></div>
<div class="sum" style="top:1029px;height:59px"></div>
<div class="r" style="left:991px;top:1030px">David Edmondson &lt;<span class="i">dme@dme.org</span>&gt; (Yest. 14:38) (<span class="tag">list notmuch sent</span>)</div>
<div class="av" style="left:991px;top:1055px"><svg width="32" height="32" viewBox="0 0 32 32"><defs><linearGradient id="sky" x1="0" y1="0" x2="1" y2="1"><stop offset="0" stop-color="#3a7ae8"/><stop offset="1" stop-color="#8cbcf4"/></linearGradient></defs>
<rect width="32" height="32" fill="url(#sky)"/>
<polygon points="0,13 3,15 6,20 8,26 9,32 0,32" fill="#b8b09c"/>
<polygon points="0,20 4,22 6,28 3,32 0,32" fill="#9a9a7c"/>
<polygon points="8,3 12,2 18,3 23,6 26,11 26,16 24,20 21,17 19,12 11,11 9,8" fill="#3e2e22"/>
<polygon points="12,4 17,4 21,7 18,8 13,7" fill="#6a5040"/><polyline points="10,9 16,8 22,10" fill="none" stroke="#7a6450" stroke-width="0.8"/>
<polygon points="9,11 19,12 22,16 23,22 21,26 17,28 11,27 9,22 8,16" fill="#d4a494"/>
<polygon points="11,17 17,17 16,22 12,23" fill="#e2b4a4"/>
<polygon points="6,13 14,13 13.5,17 7,16.5" fill="#0c0c0c"/>
<polygon points="14,13 22,13.5 21,17 15,17" fill="#141010"/>
<rect x="13" y="17" width="3" height="4" fill="#e8b8a8"/>
<rect x="11" y="22" width="6" height="1.2" fill="#a86e64"/>
<polygon points="20,17 23,16 25,22 22,25" fill="#b48878"/>
<polygon points="10,29 16,28 21,25 26,22 32,25 32,32 9,32" fill="#121418"/>
<polygon points="26,24 32,27 32,32 27,32" fill="#1e2e62"/>
<rect x="14" y="30" width="7" height="2" fill="#d0d2d8"/>
<rect x="0" y="0" width="32" height="1" fill="#3a3028" opacity="0.6"/>
<rect x="0" y="0" width="1" height="32" fill="#3a3028" opacity="0.6"/>
</svg></div>
<div class="r" style="left:969px;top:1089px">  <span class="hn">Subject:</span> <span class="sub">Re: My spam confuses notmuch-search</span></div>
<div class="r" style="left:969px;top:1113px">  <span class="hn">To:</span> <span class="to">Michael Hudson &lt;</span><span class="toi">michael.hudson@canonical.com</span><span class="to">&gt;, Sebastian Spaeth</span></div>
<div class="r" style="left:969px;top:1137px"><span class="to">&lt;</span><span class="toi">Sebastian@SSpaeth.de</span><span class="to">&gt;, Notmuch developer list &lt;</span><span class="toi">notmuch@notmuchmail.org</span><span class="to">&gt;</span></div>
</div></div>
<!-- header line -->
<div style="position:absolute;left:959px;top:20px;width:956px;height:27px;background:#2e3330"></div>
<div class="r" style="left:960px;top:23px"><span class="hl">My spam confuses notmuch-search</span></div>
<div style="position:absolute;left:969px;top:47px;width:9px;height:21px;border:1px solid #dcdccc"></div>
<!-- cursor left -->
<div style="position:absolute;left:12px;top:596px;width:9px;height:21px;border:1px solid #dcdccc"></div>
<!-- mode lines -->
<div style="position:absolute;left:1px;top:1143px;width:957px;height:27px;background:#1e2320"></div>
<div style="position:absolute;left:958px;top:1143px;width:957px;height:27px;background:#2e3330"></div>
<div class="clip" style="left:0;top:1143px;width:958px;height:27px"><div class="r" style="left:3px;top:3px"><span class="ml1">-U:@---</span><span class="mb">notmuch-fun.el</span><span class="ml1">   Bot L47    (Emacs-Lisp)--ut----------------------------------------</span></div></div>
<div class="clip" style="left:958px;top:1143px;width:957px;height:27px"><div class="r" style="left:2px;top:3px"><span class="ml2">-U:@%*-</span><span class="mb">*My spam confuses notmuch-sea...</span><span class="ml2">   Top L1     (notmuch-show Wrap)--ut--------------------</span></div></div>
<!-- minibuffer -->
<div style="position:absolute;left:12px;top:1170px;width:11px;height:23px;background:#dcdccc"></div>
<div class="r" style="left:12px;top:1171px"><span class="cur">S</span><span class="mp">hell command: </span>scrot</div>
</body></html>
